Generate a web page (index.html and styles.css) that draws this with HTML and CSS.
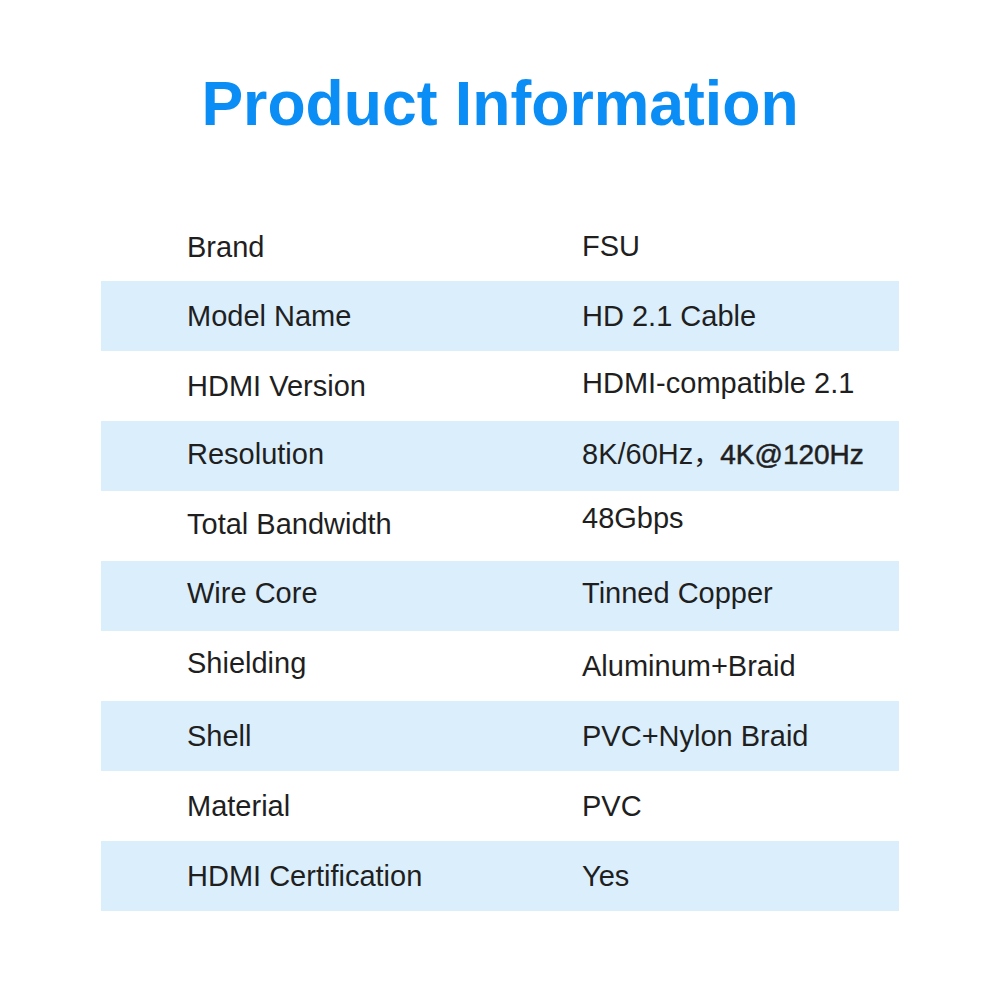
FILE: index.html
```html
<!DOCTYPE html>
<html lang="en">
<head>
<meta charset="utf-8">
<title>Product Information</title>
<link rel="stylesheet" href="styles.css">
</head>
<body>
<main class="page">
  <h1 class="title">Product Information</h1>
  <div class="spec-table">
    <div class="row"><span class="label nudge-down">Brand</span><span class="value">FSU</span></div>
    <div class="row alt"><span class="label">Model Name</span><span class="value">HD 2.1 Cable</span></div>
    <div class="row"><span class="label">HDMI Version</span><span class="value nudge-up">HDMI-compatible 2.1</span></div>
    <div class="row alt"><span class="label nudge-up-sm">Resolution</span><span class="value nudge-up-sm">8K/60Hz<span class="cjk-comma">，</span><span class="strong-part">4K@120Hz</span></span></div>
    <div class="row"><span class="label nudge-up-sm">Total Bandwidth</span><span class="value nudge-up-lg">48Gbps</span></div>
    <div class="row alt"><span class="label nudge-up">Wire Core</span><span class="value nudge-up">Tinned Copper</span></div>
    <div class="row"><span class="label nudge-up">Shielding</span><span class="value">Aluminum+Braid</span></div>
    <div class="row alt"><span class="label">Shell</span><span class="value">PVC+Nylon Braid</span></div>
    <div class="row"><span class="label">Material</span><span class="value">PVC</span></div>
    <div class="row alt"><span class="label">HDMI Certification</span><span class="value">Yes</span></div>
  </div>
</main>
</body>
</html>
```
FILE: styles.css
```css
html, body {
  margin: 0;
  padding: 0;
  background: #ffffff;
}

.page {
  width: 1000px;
  height: 1000px;
  font-family: "Liberation Sans", Arial, "Noto Sans CJK SC", sans-serif;
  color: #1f1f1f;
  padding-top: 72px;
  box-sizing: border-box;
}

.title {
  margin: 0;
  text-align: center;
  font-size: 62.5px;
  line-height: 62px;
  font-weight: 700;
  color: #0a8df5;
}

.spec-table {
  margin: 77px 101px 0 101px;
  display: flex;
  flex-direction: column;
}

.row {
  display: grid;
  grid-template-columns: 395px 1fr;
  height: 70px;
  align-items: center;
  padding-left: 86px;
  font-size: 29px;
  line-height: 34px;
}

.row.alt {
  background: #dbeefc;
}

.label, .value {
  white-space: nowrap;
  position: relative;
}

.cjk-comma {
  font-family: "Noto Sans CJK SC", sans-serif;
  font-size: 27px;
}

.strong-part {
  font-size: 28px;
  -webkit-text-stroke: 0.5px #1f1f1f;
}

.nudge-down { top: 1px; }
.nudge-up-sm { top: -2px; }
.nudge-up { top: -3px; }
.nudge-up-lg { top: -8px; }
```
